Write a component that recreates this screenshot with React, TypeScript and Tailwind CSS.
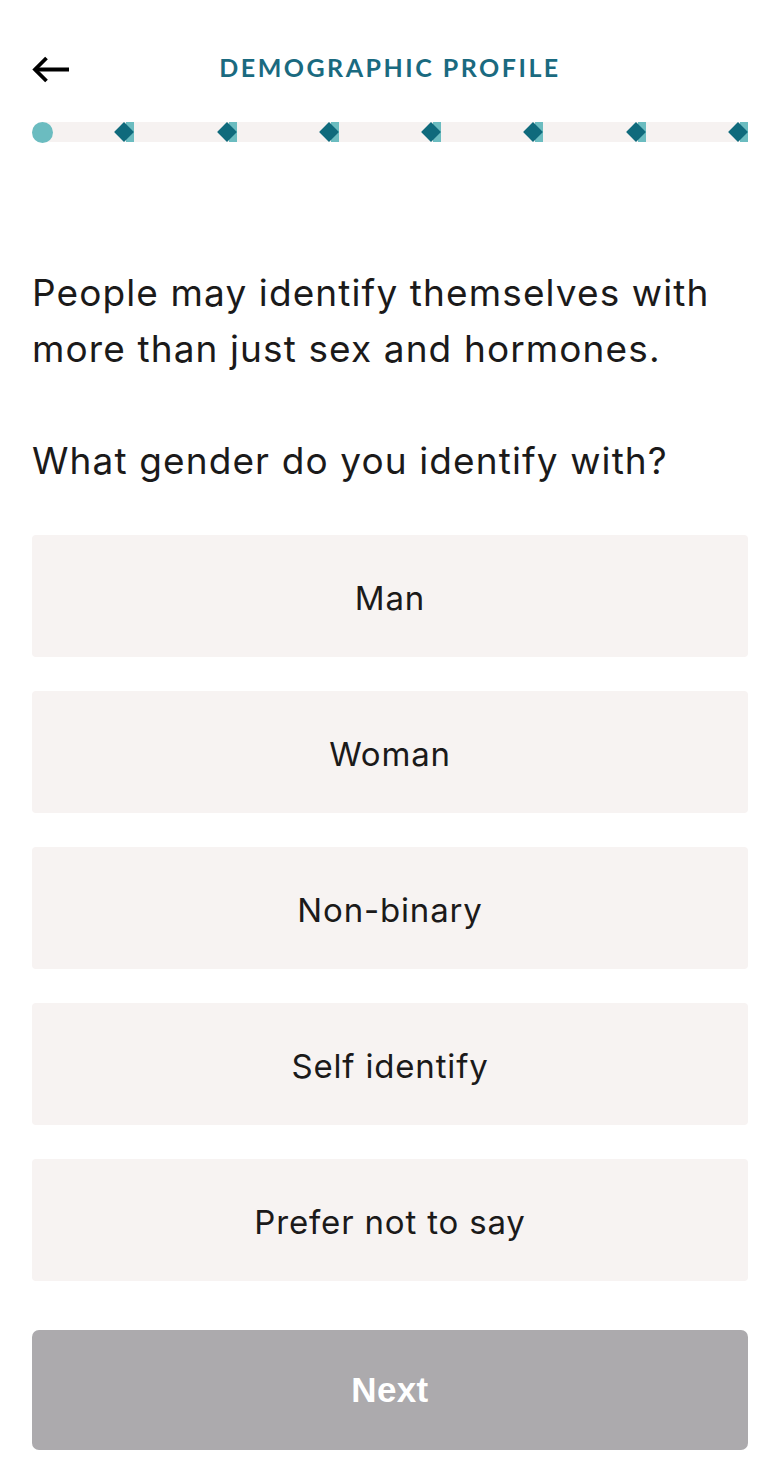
import React, { useState } from "react";

const OPTIONS = ["Man", "Woman", "Non-binary", "Self identify", "Prefer not to say"];

const ProgressTrack = () => {
    const steps = 7;
    return (
        <div className="relative mt-[32px] flex h-[20px] items-center rounded-full bg-[#f6f2f1]">
            <div className="absolute left-0 top-[-0.5px] h-[21px] w-[21px] rounded-full bg-[#6bbcc0]" />
            {Array.from({ length: steps }).map((_, i) => (
                <div key={i} className="flex h-full flex-1 items-center justify-end">
                    <div className="relative flex h-full w-[20px] items-center justify-center">
                        <div className="absolute right-0 top-0 h-full w-[8px] bg-[#6bbcc0]" />
                        <div className="relative h-[14px] w-[14px] rotate-45 bg-[#0f6a7c]" />
                    </div>
                </div>
            ))}
        </div>
    );
};

export default function App() {
    const [picked, setPicked] = useState<string | null>(null);

    return (
        <div className="min-h-[1482px] w-[780px] bg-white px-[32px] pt-[46px] text-[#1b1a1a] [font-family:Inter,'Noto_Sans',sans-serif]">
            <div className="relative flex h-[44px] items-center justify-center">
                <button className="absolute left-0 top-[10px] text-black" title="Back">
                    <svg width="38" height="30" viewBox="0 0 38 30" fill="none" stroke="currentColor" strokeWidth="3.8" strokeLinecap="butt">
                        <path d="M3 13.5 H37" />
                        <path d="M14.5 2 L3 13.5 L14.5 25" />
                    </svg>
                </button>
                <h1 className="text-[25px] font-bold tracking-[0.1em] text-[#1a6a80] [font-family:Lato,sans-serif]">
                    DEMOGRAPHIC PROFILE
                </h1>
            </div>

            <ProgressTrack />

            <p className="mt-[123px] text-[37px] leading-[56px] tracking-[0.03em]">
                People may identify themselves with more than just sex and hormones.
            </p>
            <p className="mt-[56px] text-[37px] leading-[56px] tracking-[0.03em]">
                What gender do you identify with?
            </p>

            <div className="mt-[46px] flex flex-col gap-[34px]">
                {OPTIONS.map((opt) => (
                    <button
                        key={opt}
                        onClick={() => setPicked(opt)}
                        className={`flex h-[122px] items-center justify-center rounded-[4px] pt-[5px] text-[33px] tracking-[0.025em] ${
                            picked === opt ? "bg-[#e3f1f2]" : "bg-[#f7f3f2]"
                        }`}
                    >
                        {opt}
                    </button>
                ))}
            </div>

            <button
                disabled={!picked}
                className="mt-[49px] flex h-[120px] w-full items-center justify-center rounded-[7px] bg-[#acaaad] text-[35px] font-bold tracking-[0.01em] text-white [font-family:'Liberation_Sans',Arial,sans-serif]"
            >
                Next
            </button>
        </div>
    );
}
